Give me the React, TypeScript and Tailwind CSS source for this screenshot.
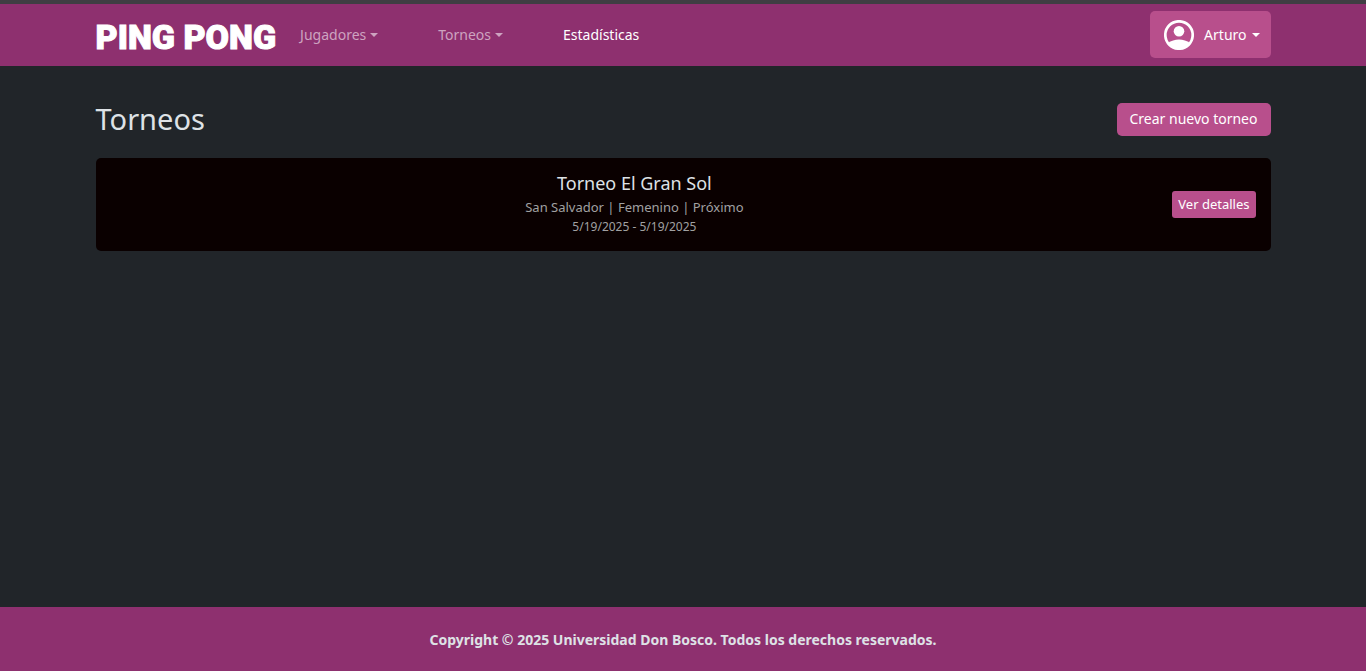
import type { ReactNode } from "react";

function Caret() {
  return (
    <span
      aria-hidden="true"
      className="h-0 w-0 border-x-4 border-t-4 border-x-transparent border-t-current"
    />
  );
}

function NavDropdown({ children }: { children: ReactNode }) {
  return (
    <button
      type="button"
      aria-haspopup="menu"
      className="flex items-center gap-1 text-[#cda3c0]"
    >
      {children}
      <Caret />
    </button>
  );
}

function PersonIcon() {
  return (
    <svg viewBox="0 0 30 30" className="size-[30px]" aria-hidden="true">
      <circle cx="15" cy="15" r="13.7" fill="none" stroke="#fff" strokeWidth="2.7" />
      <circle cx="15" cy="11.3" r="5.3" fill="#fff" />
      <path d="M4 23C7 20.900 11 19.600 15 19.600s8 1.300 11 3.400C23 27 19.300 29 15 29S7 27 4 23Z" fill="#fff" />
    </svg>
  );
}

type Tournament = {
  name: string;
  place: string;
  category: string;
  status: string;
  start: string;
  end: string;
};

const tournaments: Tournament[] = [
  {
    name: "Torneo El Gran Sol",
    place: "San Salvador",
    category: "Femenino",
    status: "Próximo",
    start: "5/19/2025",
    end: "5/19/2025",
  },
];

function TournamentCard({ item }: { item: Tournament }) {
  return (
    <li className="flex items-center gap-[14px] rounded-[5px] bg-[#0a0000] px-[15px] pt-[14px] pb-[15px]">
      <div className="flex-1 text-center">
        <h2 className="mb-1 text-[18px] leading-[22px]">{item.name}</h2>
        <p className="text-[13px] leading-[19px] text-[#a1a1a2]">
          {item.place} | {item.category} | {item.status}
        </p>
        <p className="text-[12px] leading-[19px] text-[#a1a1a2]">
          {item.start} - {item.end}
        </p>
      </div>
      <a
        href="#detalles"
        className="rounded-[3px] bg-[#b84f8c] px-[6px] py-1 text-[13px] leading-[19px] text-white"
      >
        Ver detalles
      </a>
    </li>
  );
}

export default function App() {
  return (
    <div className="flex min-h-screen flex-col bg-[#212529] font-['Noto_Sans',sans-serif] text-[14px] leading-[22px] text-[#dee2e6]">
      <header className="border-t-4 border-[#3f3e43] bg-[#8e306f]">
        <nav className="mx-auto flex h-[62px] w-full max-w-[1207px] items-center px-4">
          <a
            href="#inicio"
            className="mr-6 pt-[3px] font-['Roboto',sans-serif] text-[34px] leading-[40px] font-black text-white [-webkit-text-stroke:1px_#fff] [stroke-linejoin:round]"
          >
            PING PONG
          </a>
          <div className="flex items-center gap-[60px]">
            <NavDropdown>Jugadores</NavDropdown>
            <NavDropdown>Torneos</NavDropdown>
            <a href="#estadisticas" className="text-white">
              Estadísticas
            </a>
          </div>
          <button
            type="button"
            aria-haspopup="menu"
            className="mt-[7px] ml-auto flex h-[47px] items-center self-start rounded-[5px] bg-[#b84f8c] pr-[11px] pl-[14px] text-white"
          >
            <PersonIcon />
            <span className="mr-[5px] ml-[10px]">Arturo</span>
            <Caret />
          </button>
        </nav>
      </header>

      <main className="mx-auto w-full max-w-[1207px] flex-1 px-4 pt-9">
        <div className="mb-[22px] flex items-center justify-between">
          <h1 className="text-[29px] leading-[34px]">Torneos</h1>
          <a href="#crear" className="rounded-[5px] bg-[#b84f8c] px-[13px] pt-1 pb-[6px] leading-[23px] text-white">
            Crear nuevo torneo
          </a>
        </div>
        <ul>
          {tournaments.map((item) => (
            <TournamentCard key={item.name} item={item} />
          ))}
        </ul>
      </main>

      <footer className="bg-[#8e306f] pt-[22px] pb-5 text-center font-bold">
        Copyright © 2025 Universidad Don Bosco. Todos los derechos reservados.
      </footer>
    </div>
  );
}
